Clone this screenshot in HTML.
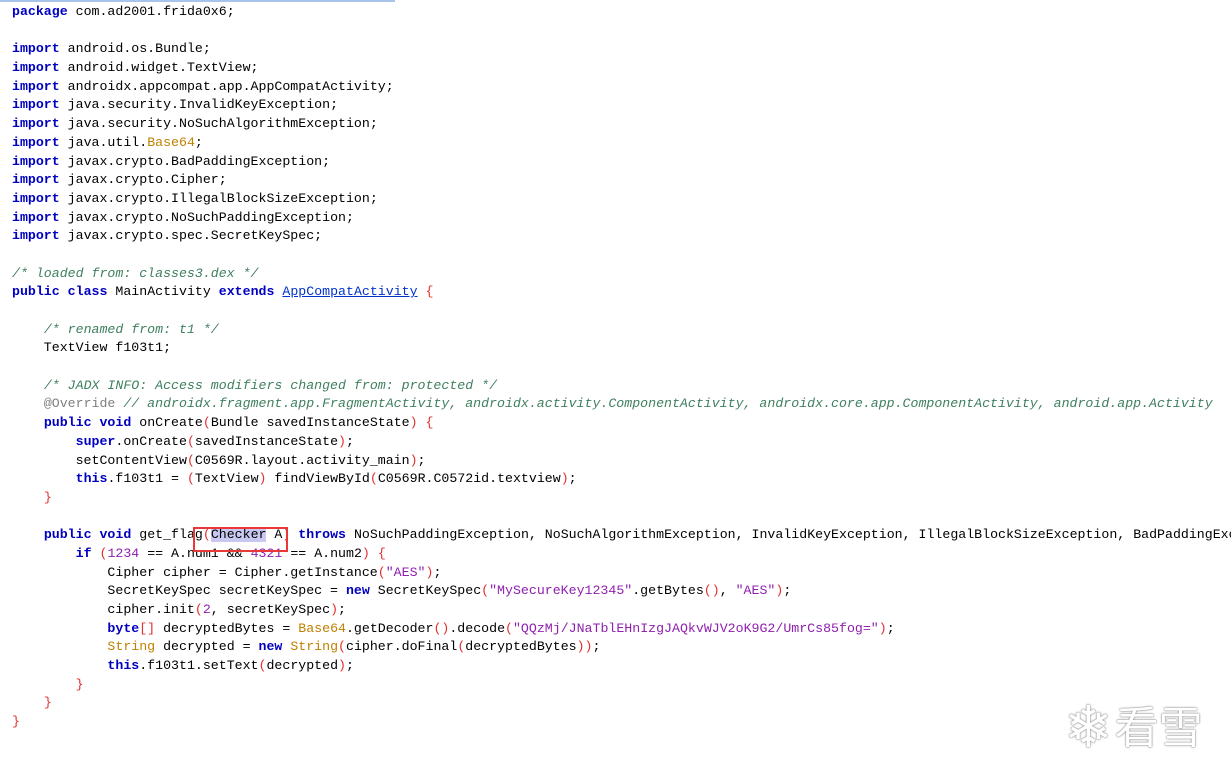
<!DOCTYPE html>
<html><head><meta charset="utf-8"><style>
html,body{margin:0;padding:0;background:#fff;width:1231px;height:771px;overflow:hidden;position:relative}
pre{margin:0;position:absolute;left:12px;top:3px;width:1219px;overflow:hidden;font-family:"Liberation Mono",monospace;font-size:13.25px;line-height:18.68px;color:#000;white-space:pre}
.k{color:#0000c0;font-weight:bold}
.c{color:#3f7f5f;font-style:italic}
.p{color:#e03030}
.n{color:#9020b0}
.s{color:#9020b0}
.o{color:#c08000}
.g{color:#808080}
.u{color:#0033cc;text-decoration:underline}
.h{background:#c8c8f0}
#bar{position:absolute;left:0;top:0;width:395px;height:2px;background:#a8c4e8}
#box{position:absolute;left:193px;top:527px;width:95px;height:25px;border:2px solid #e83838;box-sizing:border-box}
#logo{position:absolute;left:1064px;top:692px;color:#fff;font-family:"Noto Sans CJK SC",sans-serif;font-size:44px;line-height:60px;text-shadow:0 0 2px #888,0 0 1px #666;white-space:nowrap}
#logo span{font-size:58px;vertical-align:-4px;margin-right:2px}
</style></head><body>
<div id="bar"></div>
<pre><span class="k">package</span> com.ad2001.frida0x6;

<span class="k">import</span> android.os.Bundle;
<span class="k">import</span> android.widget.TextView;
<span class="k">import</span> androidx.appcompat.app.AppCompatActivity;
<span class="k">import</span> java.security.InvalidKeyException;
<span class="k">import</span> java.security.NoSuchAlgorithmException;
<span class="k">import</span> java.util.<span class="o">Base64</span>;
<span class="k">import</span> javax.crypto.BadPaddingException;
<span class="k">import</span> javax.crypto.Cipher;
<span class="k">import</span> javax.crypto.IllegalBlockSizeException;
<span class="k">import</span> javax.crypto.NoSuchPaddingException;
<span class="k">import</span> javax.crypto.spec.SecretKeySpec;

<span class="c">/* loaded from: classes3.dex */</span>
<span class="k">public</span> <span class="k">class</span> MainActivity <span class="k">extends</span> <span class="u">AppCompatActivity</span> <span class="p">{</span>

    <span class="c">/* renamed from: t1 */</span>
    TextView f103t1;

    <span class="c">/* JADX INFO: Access modifiers changed from: protected */</span>
    <span class="g">@Override</span> <span class="c">// androidx.fragment.app.FragmentActivity, androidx.activity.ComponentActivity, androidx.core.app.ComponentActivity, android.app.Activity</span>
    <span class="k">public</span> <span class="k">void</span> onCreate<span class="p">(</span>Bundle savedInstanceState<span class="p">)</span> <span class="p">{</span>
        <span class="k">super</span>.onCreate<span class="p">(</span>savedInstanceState<span class="p">)</span>;
        setContentView<span class="p">(</span>C0569R.layout.activity_main<span class="p">)</span>;
        <span class="k">this</span>.f103t1 = <span class="p">(</span>TextView<span class="p">)</span> findViewById<span class="p">(</span>C0569R.C0572id.textview<span class="p">)</span>;
    <span class="p">}</span>

    <span class="k">public</span> <span class="k">void</span> get_flag<span class="p">(</span><span class="h">Checker</span> A<span class="p">)</span> <span class="k">throws</span> NoSuchPaddingException, NoSuchAlgorithmException, InvalidKeyException, IllegalBlockSizeException, BadPaddingException <span class="p">{</span>
        <span class="k">if</span> <span class="p">(</span><span class="n">1234</span> == A.num1 &amp;&amp; <span class="n">4321</span> == A.num2<span class="p">)</span> <span class="p">{</span>
            Cipher cipher = Cipher.getInstance<span class="p">(</span><span class="s">"AES"</span><span class="p">)</span>;
            SecretKeySpec secretKeySpec = <span class="k">new</span> SecretKeySpec<span class="p">(</span><span class="s">"MySecureKey12345"</span>.getBytes<span class="p">()</span>, <span class="s">"AES"</span><span class="p">)</span>;
            cipher.init<span class="p">(</span><span class="n">2</span>, secretKeySpec<span class="p">)</span>;
            <span class="k">byte</span><span class="p">[]</span> decryptedBytes = <span class="o">Base64</span>.getDecoder<span class="p">()</span>.decode<span class="p">(</span><span class="s">"QQzMj/JNaTblEHnIzgJAQkvWJV2oK9G2/UmrCs85fog="</span><span class="p">)</span>;
            <span class="o">String</span> decrypted = <span class="k">new</span> <span class="o">String</span><span class="p">(</span>cipher.doFinal<span class="p">(</span>decryptedBytes<span class="p">))</span>;
            <span class="k">this</span>.f103t1.setText<span class="p">(</span>decrypted<span class="p">)</span>;
        <span class="p">}</span>
    <span class="p">}</span>
<span class="p">}</span></pre>
<div id="box"></div>
<div id="logo"><span>❄</span>看雪</div>
</body></html>
